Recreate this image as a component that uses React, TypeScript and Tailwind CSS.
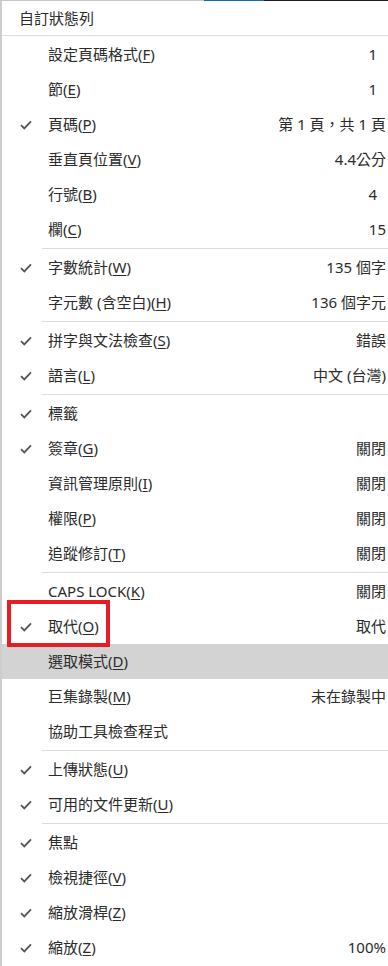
import React from "react";

type Item =
  | { sep: true }
  | { label: string; key?: string; value?: string; checked?: boolean; active?: boolean; narrow?: boolean };

const items: Item[] = [
  { label: "設定頁碼格式", key: "F", value: "1", narrow: true },
  { label: "節", key: "E", value: "1", narrow: true },
  { label: "頁碼", key: "P", value: "第 1 頁，共 1 頁", checked: true },
  { label: "垂直頁位置", key: "V", value: "4.4公分" },
  { label: "行號", key: "B", value: "4", narrow: true },
  { label: "欄", key: "C", value: "15" },
  { sep: true },
  { label: "字數統計", key: "W", value: "135 個字", checked: true },
  { label: "字元數 (含空白)", key: "H", value: "136 個字元" },
  { sep: true },
  { label: "拼字與文法檢查", key: "S", value: "錯誤", checked: true },
  { label: "語言", key: "L", value: "中文 (台灣)", checked: true },
  { sep: true },
  { label: "標籤", checked: true },
  { label: "簽章", key: "G", value: "關閉", checked: true },
  { label: "資訊管理原則", key: "I", value: "關閉" },
  { label: "權限", key: "P", value: "關閉" },
  { label: "追蹤修訂", key: "T", value: "關閉" },
  { sep: true },
  { label: "CAPS LOCK", key: "K", value: "關閉" },
  { label: "取代", key: "O", value: "取代", checked: true },
  { label: "選取模式", key: "D", active: true },
  { label: "巨集錄製", key: "M", value: "未在錄製中" },
  { label: "協助工具檢查程式" },
  { sep: true },
  { label: "上傳狀態", key: "U", checked: true },
  { label: "可用的文件更新", key: "U", checked: true },
  { sep: true },
  { label: "焦點", checked: true },
  { label: "檢視捷徑", key: "V", checked: true },
  { label: "縮放滑桿", key: "Z", checked: true },
  { label: "縮放", key: "Z", value: "100%", checked: true },
];

function Check() {
  return (
    <svg width="12" height="10" viewBox="0 0 12 10" fill="none">
      <path d="M1 5.2 L4.3 8.4 L11 1.4" stroke="#555" strokeWidth="1.8" />
    </svg>
  );
}

export default function App() {
  return (
    <div
      className="w-[388px] h-[966px] bg-white overflow-hidden relative text-[15px] text-[#2b2b2b]"
      style={{ fontFamily: '"Noto Sans", "Noto Sans CJK TC", sans-serif' }}
    >
      {/* top edge of the window behind */}
      <div className="flex h-px">
        <div className="w-[204px] bg-[#c8c8c8]" />
        <div className="w-[60px] bg-[#0f6cbd]" />
        <div className="flex-1 bg-[#1f1f1f]" />
      </div>

      <div className="border-l-2 border-[#cdcdcd] h-full">
        <div className="h-[34px] flex items-center pl-[17px] pt-px">自訂狀態列</div>
        <div className="h-px bg-[#dcdcdc] mb-px" />

        {items.map((item, i) =>
          "sep" in item ? (
            <div key={i} className="h-px bg-[#dcdcdc] my-px ml-[40px]" />
          ) : (
            <div
              key={i}
              className={`h-[35px] flex items-center whitespace-nowrap ${item.active ? "bg-[#d3d3d3]" : ""}`}
            >
              <div className="w-[46px] pl-[18px] flex items-center">{item.checked && <Check />}</div>
              <span>
                {item.label}
                {item.key && (
                  <>
                    (<span className="underline underline-offset-2">{item.key}</span>)
                  </>
                )}
              </span>
              <div className="flex-1" />
              {item.value && <span className={item.narrow ? "pr-[11px]" : "pr-[2px]"}>{item.value}</span>}
            </div>
          )
        )}
      </div>

      {/* red annotation box */}
      <div className="absolute left-[7px] top-[600px] w-[103px] h-[47px] border-4 border-[#e81c24]" />
    </div>
  );
}
